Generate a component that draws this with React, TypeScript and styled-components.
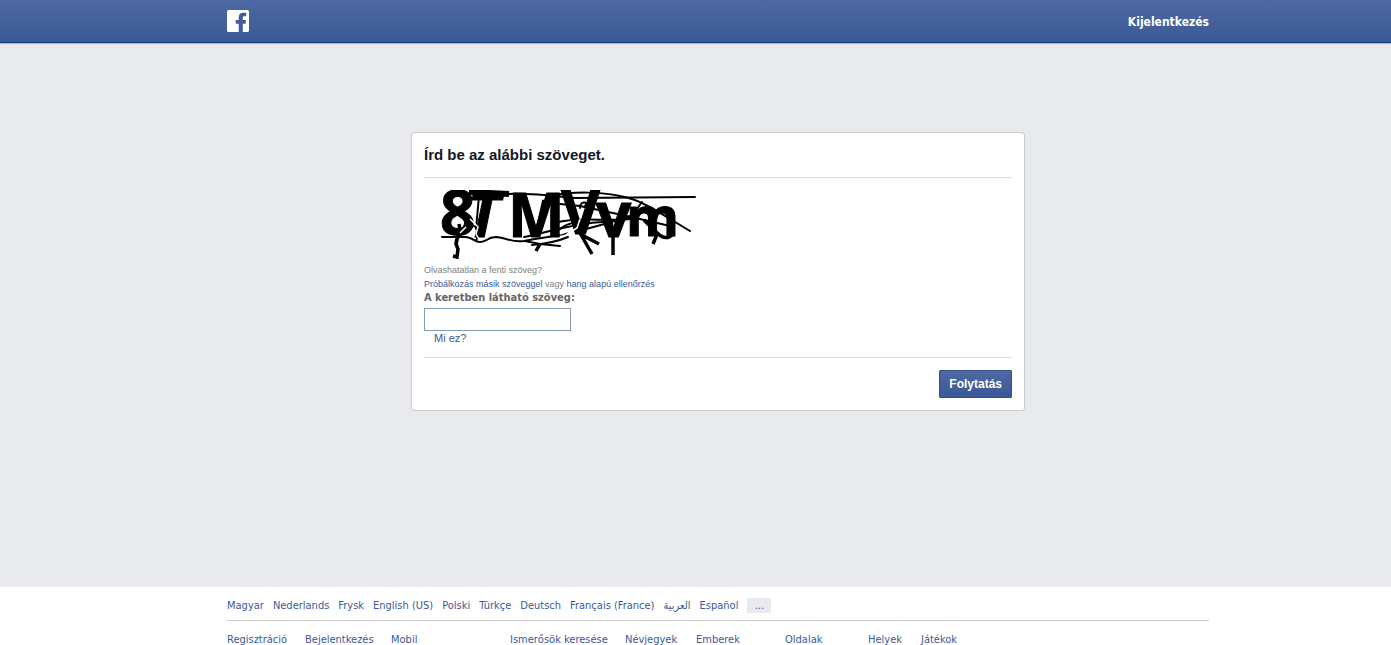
import React from "react";
import styled, { createGlobalStyle } from "styled-components";

const GlobalStyle = createGlobalStyle`
  *, *::before, *::after { box-sizing: border-box; }
  body {
    margin: 0;
    background: #fff;
    color: #141823;
    font-family: "Liberation Sans", Arial, sans-serif;
    font-size: 11px;
    line-height: 14px;
  }
`;

const tahoma = `Tahoma, "DejaVu Sans Condensed", "Noto Sans", sans-serif`;

const Page = styled.div`
  display: flex;
  flex-direction: column;
  min-height: 100vh;
`;

const TopBar = styled.header`
  height: 43px;
  padding-left: 45px;
  background: linear-gradient(#4e69a2, #3b5998);
  border-bottom: 1px solid #133783;
  box-shadow: 0 1px 1px rgba(0, 0, 0, 0.2);
  position: relative;
`;

const Container = styled.div`
  max-width: 982px;
  margin: 0 auto;
`;

const TopRow = styled(Container)`
  display: flex;
  align-items: center;
  justify-content: space-between;
  height: 42px;
`;

const HomeLink = styled.a`
  display: block;
  height: 22px;
`;

const LogoutButton = styled.button`
  padding: 2px 0 0;
  border: 0;
  background: none;
  color: #fff;
  cursor: pointer;
  font: bold 12px/16px ${tahoma};
`;

const Main = styled.main`
  flex: 1;
  padding: 89px 0 89px 45px;
  background: #e9eaed;
`;

const Card = styled.form`
  max-width: 614px;
  margin: 0 auto;
  padding: 0 12px;
  background: #fff;
  border: 1px solid #c9cbd0;
  border-radius: 3px;
`;

const Title = styled.h1`
  margin: 0;
  padding: 12px 0;
  border-bottom: 1px solid #dcdde1;
  font-size: 15px;
  line-height: 20px;
`;

const Body = styled.div`
  display: flex;
  flex-direction: column;
  align-items: flex-start;
  padding: 12px 0;
  border-bottom: 1px solid #dcdde1;
`;

const Captcha = styled.svg`
  display: block;
  margin-bottom: 3px;
`;

const Hint = styled.p`
  margin: 0;
  color: #808080;
  font-size: 9px;
  line-height: 14px;
`;

const Link = styled.a`
  color: #3b5998;
  text-decoration: none;
  &:hover { text-decoration: underline; }
`;

const Label = styled.label`
  color: #666;
  font: bold 11px/14px ${tahoma};
`;

const TextInput = styled.input`
  width: 147px;
  height: 23px;
  margin-top: 3px;
  padding: 3px;
  border: 1px solid #7f9db9;
  font: 11px "Liberation Sans", Arial, sans-serif;
`;

const HelpLink = styled(Link)`
  margin-left: 10px;
`;

const Actions = styled.div`
  display: flex;
  justify-content: flex-end;
  padding: 12px 0;
`;

const SubmitButton = styled.button`
  height: 28px;
  padding: 0 9px;
  border: 1px solid #355089;
  border-radius: 1px;
  background: linear-gradient(#4e69a2, #3b5998);
  color: #fff;
  cursor: pointer;
  font: bold 12px/26px "Liberation Sans", Arial, sans-serif;
`;

const Footer = styled.footer`
  padding: 11px 0 0 45px;
  font-family: ${tahoma};
  height: 58px;
`;

const Languages = styled.nav`
  display: flex;
  gap: 9px;
  padding-bottom: 7px;
  border-bottom: 1px solid #ccc;
  line-height: 15px;
  white-space: nowrap;
`;

const MoreButton = styled.button`
  width: 24px;
  height: 15px;
  padding: 0;
  border: 0;
  background: #e9eaed;
  color: #3b5998;
  cursor: pointer;
  font: 11px/15px ${tahoma};
`;

const SiteLinks = styled.nav`
  display: grid;
  grid-template-columns: 78px 86px 119px 115px 71px 89px 83px 53px auto;
  padding-top: 12px;
  white-space: nowrap;
`;

const Letter = styled.text<{ $size: number; $italic?: boolean }>`
  font-family: "Open Sans", "Noto Sans", sans-serif;
  font-weight: bold;
  font-size: ${(p) => p.$size}px;
  font-style: ${(p) => (p.$italic ? "italic" : "normal")};
  stroke: #000;
  stroke-width: 1px;
`;

const languages = [
  "Magyar", "Nederlands", "Frysk", "English (US)", "Polski",
  "Türkçe", "Deutsch", "Français (France)", "العربية", "Español",
];

const siteLinks = [
  "Regisztráció", "Bejelentkezés", "Mobil", "Ismerősök keresése", "Névjegyek",
  "Emberek", "Oldalak", "Helyek", "Játékok",
];

function Logo() {
  return (
    <svg width="22" height="22" viewBox="0 0 22 22" aria-hidden="true">
      <rect width="22" height="22" rx="1.5" fill="#fff" />
      <path
        fill="#425d9b"
        d="M11.700 22v-8.200H8.700V10h3V7.500C11.700 4.600 13.300 2.800 16 2.800h3.200v3.500h-1.700c-1.300 0-1.700.5-1.700 1.500V10H19l-.4 3.800h-2.800V22z"
      />
    </svg>
  );
}

function CaptchaImage() {
  return (
    <Captcha width="280" height="70" viewBox="0 6 280 70" role="img" aria-label="Captcha">
      <Letter $size={62} x="16" y="51">8</Letter>
      <Letter $size={62} $italic x="43" y="53">T</Letter>
      <Letter $size={60} x="84" y="53">M</Letter>
      <Letter $size={60} x="137" y="50">V</Letter>
      <Letter $size={62} x="172" y="53">v</Letter>
      <Letter $size={54} x="202" y="52">m</Letter>
      <g fill="none" stroke="#000" strokeWidth="2" strokeLinecap="round">
        <path d="M18 53H42C50 54 50 58 56 58C64 58 62 53 72 53C84 54 88 59 100 57C112 54 125 54 143 49" />
        <path d="M84 10C108 9 130 12 150 14L271 13" />
        <path d="M126 12C150 7 178 8 196 12C212 15 218 19 226 23L266 47" />
        <path d="M136 20L156 22L203 32L246 42" />
        <path d="M100 53C125 48 150 39 180 38S210 28 218 18" />
        <path d="M134 38C160 32 184 39 214 34M136 45C145 38 153 38 162 38M162 45L188 38" />
        <path d="M55 12L52 45M61 11L56 45M45 39L56 46L52 57" />
        <path d="M156 24Q156 17 163 19L161 22M173 20Q174 26 180 25" />
        <path d="M101 57L116 60L136 62M108 61Q130 59 144 53" />
      </g>
      <path d="M45 8L85 10" fill="none" stroke="#000" strokeWidth="6" />
      <g fill="none" stroke="#000" strokeWidth="3.500">
        <path d="M35 40L36 46M46 43Q33 48 32 60L34 65L33 73L29 72" />
        <path d="M120 16L114 42M116 60L112 67" />
        <path d="M156 49L168 70M156 50L175 60M189 48V71M234 48L229 60" />
        <path d="M220 36L232 48Q242 58 249 50" />
      </g>
      <g fill="none" stroke="#fff" strokeWidth="1.500">
        <path d="M46 35L54 43L52 50L56 57M36 49L42 43" />
        <path d="M156 35L153 44L142 51M136 50L145 47" />
      </g>
    </Captcha>
  );
}

export default function App() {
  return (
    <Page>
      <GlobalStyle />
      <TopBar>
        <TopRow>
          <HomeLink href="#" aria-label="Facebook"><Logo /></HomeLink>
          <LogoutButton type="button">Kijelentkezés</LogoutButton>
        </TopRow>
      </TopBar>
      <Main>
        <Card onSubmit={(e) => e.preventDefault()}>
          <Title>Írd be az alábbi szöveget.</Title>
          <Body>
            <CaptchaImage />
            <Hint>Olvashatatlan a fenti szöveg?</Hint>
            <Hint>
              <Link href="#">Próbálkozás másik szöveggel</Link> vagy{" "}
              <Link href="#">hang alapú ellenőrzés</Link>
            </Hint>
            <Label htmlFor="captcha">A keretben látható szöveg:</Label>
            <TextInput id="captcha" type="text" autoComplete="off" />
            <HelpLink href="#">Mi ez?</HelpLink>
          </Body>
          <Actions>
            <SubmitButton type="submit">Folytatás</SubmitButton>
          </Actions>
        </Card>
      </Main>
      <Footer>
        <Container>
          <Languages>
            {languages.map((name) => <Link href="#" key={name}>{name}</Link>)}
            <MoreButton type="button">...</MoreButton>
          </Languages>
          <SiteLinks>
            {siteLinks.map((name) => <div key={name}><Link href="#">{name}</Link></div>)}
          </SiteLinks>
        </Container>
      </Footer>
    </Page>
  );
}
